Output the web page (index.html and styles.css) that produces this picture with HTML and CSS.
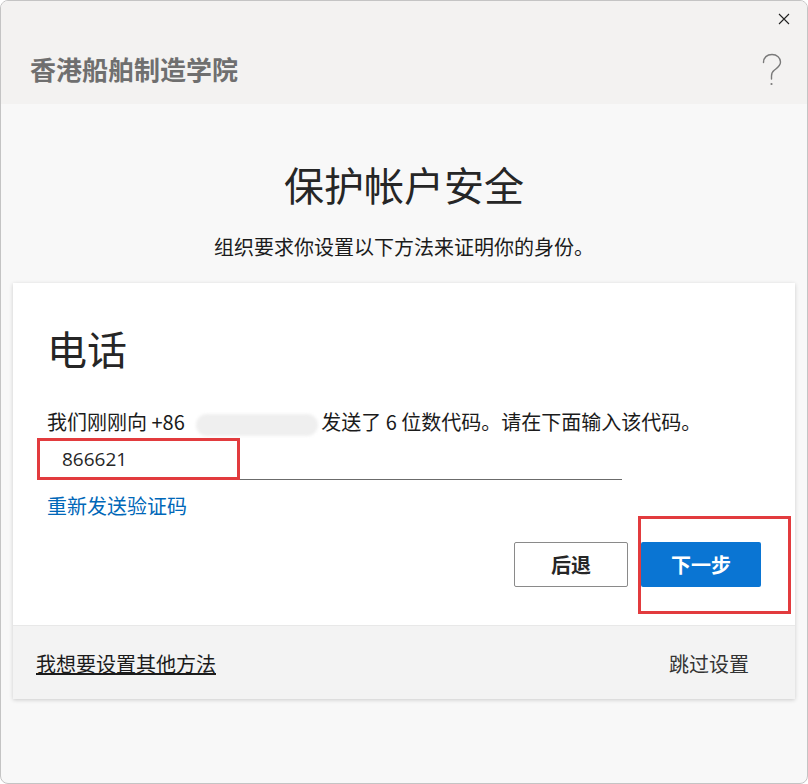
FILE: index.html
```html
<!DOCTYPE html>
<html>
  <head>
    <title>保护帐户安全</title>
    <meta name="viewport" content="width=device-width, initial-scale=1.0" />
    <link rel="stylesheet" href="styles.css">
  </head>
  <body>
    <div class="window">
      <div class="window-header">
        <div class="brand">香港船舶制造学院</div>
        <button class="close-button" title="关闭">
          <svg width="12" height="12" viewBox="0 0 12 12">
            <path d="M1 1 L11 11 M11 1 L1 11" stroke="#222" stroke-width="1.1" fill="none" />
          </svg>
        </button>
        <button class="help-button" title="帮助">
          <svg width="22" height="34" viewBox="0 0 22 34">
            <path d="M2.5 9.5 C2.5 4.5 6 1.5 11 1.5 C16 1.5 19.5 4.8 19.5 9 C19.5 13 16.5 14.8 13.5 17 C11.2 18.7 10.5 20.5 10.5 23 L10.5 26"
              stroke="#7a7a7a" stroke-width="1.4" fill="none" stroke-linecap="round" />
            <circle cx="10.5" cy="31" r="1.1" fill="#7a7a7a" />
          </svg>
        </button>
      </div>

      <div class="page">
        <h1>保护帐户安全</h1>
        <p class="subtitle">组织要求你设置以下方法来证明你的身份。</p>

        <div class="method-card">
          <div class="method-body">
            <h2>电话</h2>
            <p class="method-text">
              我们刚刚向 +86 <span class="redacted"></span>发送了 6 位数代码。请在下面输入该代码。
            </p>
            <div class="code-field">
              <input type="text" class="code-input" value="866621" />
              <div class="highlight highlight-input"></div>
            </div>
            <a href="#" class="resend-link">重新发送验证码</a>
            <div class="method-actions">
              <button class="action-button secondary">后退</button>
              <div class="next-wrap">
                <button class="action-button primary">下一步</button>
                <div class="highlight highlight-next"></div>
              </div>
            </div>
          </div>
          <div class="method-footer">
            <a href="#" class="other-link">我想要设置其他方法</a>
            <a href="#" class="skip-link">跳过设置</a>
          </div>
        </div>
      </div>
    </div>
  </body>
</html>
```

FILE: styles.css
```css
body {
  margin: 0;
  padding: 0;
  background-color: #fff;
  font-family: "Noto Sans CJK SC", "Noto Sans", sans-serif;
  color: #1b1b1b;
}

.window {
  height: 784px;
  box-sizing: border-box;
  border: 1px solid #c4c4c4;
  border-radius: 8px;
  background-color: #f8f8f8;
  overflow: hidden;
}

.window-header {
  position: relative;
  height: 103px;
  background-color: #f3f2f1;
  display: flex;
  align-items: center;
  padding-left: 29px;
}

.brand {
  font-size: 26px;
  font-weight: bold;
  color: #6f6f6f;
  margin-top: 31px;
}

.close-button,
.help-button {
  position: absolute;
  border: none;
  background: none;
  padding: 0;
  cursor: pointer;
}

.close-button {
  top: 12px;
  right: 17px;
}

.help-button {
  top: 52px;
  right: 24px;
}

.page {
  padding: 0 12px;
}

h1 {
  margin: 54px 0 0;
  font-size: 40px;
  line-height: 52px;
  font-weight: normal;
  text-align: center;
  color: #262626;
}

.subtitle {
  margin: 23px 0 0;
  font-size: 20px;
  line-height: 28px;
  text-align: center;
}

.method-card {
  margin-top: 22px;
  background-color: #fff;
  box-shadow: 0 1px 4px rgba(0, 0, 0, 0.18);
}

.method-body {
  padding: 39px 34px 38px 34px;
}

h2 {
  margin: 0;
  font-size: 40px;
  line-height: 52px;
  font-weight: normal;
  color: #262626;
}

.method-text {
  margin: 34px 0 0;
  font-size: 20px;
  line-height: 28px;
  white-space: nowrap;
}

.redacted {
  display: inline-block;
  width: 122px;
  height: 22px;
  margin: 0 3px 0 7px;
  vertical-align: middle;
  border-radius: 11px;
  background-color: #efefef;
  filter: blur(1.5px);
}

.code-field {
  position: relative;
  width: 575px;
  margin-top: 8px;
}

.code-input {
  display: block;
  width: 100%;
  height: 36px;
  box-sizing: border-box;
  border: none;
  border-bottom: 1px solid #6b6b6b;
  padding: 0 0 6px 15px;
  font-family: "Open Sans", "Noto Sans", sans-serif;
  font-size: 19px;
  color: #262626;
  outline: none;
}

.highlight {
  position: absolute;
  border: 3px solid #e23b3e;
  pointer-events: none;
}

.highlight-input {
  left: -10px;
  top: -6px;
  width: 197px;
  height: 36px;
}

.resend-link {
  display: inline-block;
  margin-top: 12px;
  font-size: 20px;
  line-height: 28px;
  color: #0067b8;
  text-decoration: none;
}

.method-actions {
  display: flex;
  justify-content: flex-end;
  gap: 13px;
  margin-top: 22px;
}

.next-wrap {
  position: relative;
}

.highlight-next {
  left: -3px;
  top: -26px;
  width: 147px;
  height: 92px;
}

.action-button {
  height: 45px;
  font-family: "Noto Sans CJK SC", sans-serif;
  font-size: 20px;
  font-weight: bold;
  cursor: pointer;
  border-radius: 2px;
}

.action-button.secondary {
  width: 114px;
  background-color: #fff;
  border: 1px solid #8a8a8a;
  color: #262626;
}

.action-button.primary {
  width: 120px;
  background-color: #0a75d3;
  border: none;
  color: #fff;
}

.method-footer {
  height: 74px;
  box-sizing: border-box;
  display: flex;
  justify-content: space-between;
  align-items: center;
  padding: 2px 46px 0 23px;
  background-color: #f3f3f3;
  border-top: 1px solid #e8e8e8;
  font-size: 20px;
}

.other-link {
  color: #1b1b1b;
  text-decoration: underline;
}

.skip-link {
  color: #333;
  text-decoration: none;
}
```
